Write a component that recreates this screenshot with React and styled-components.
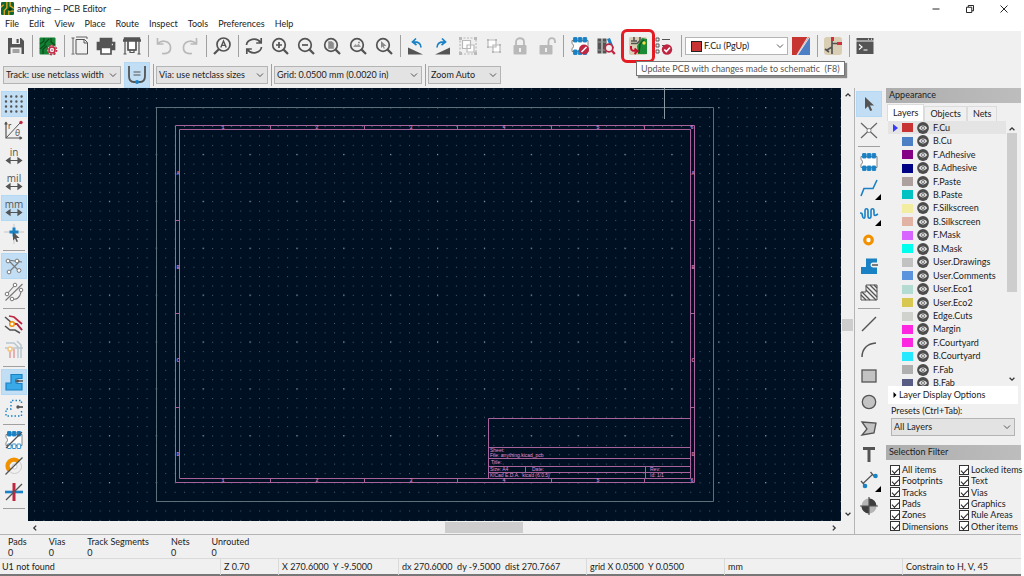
import { useState } from "react";
import styled, { createGlobalStyle } from "styled-components";

const INK = "#545454";
const BLUE = "#1a81c4";
const RED = "#bf2641";
const OFF = "#b9b9b9";
const PINK = "#a9629b";

const GlobalStyle = createGlobalStyle`
  * {
    box-sizing: border-box;
  }
  body {
    margin: 0;
    background: #fff;
    color: #1c1c1c;
    font-family: Lato, "Open Sans", sans-serif;
    font-size: 9px;
    line-height: 12px;
  }
  button, select, input {
    font: inherit;
    color: inherit;
    margin: 0;
  }
`;

// Window
const Window = styled.div`
  display: flex;
  flex-direction: column;
  height: 100vh;
  min-height: 576px;
  padding-right: 3px;
  overflow: hidden;
`;

const TitleBar = styled.header`
  display: flex;
  align-items: center;
  height: 17px;
  padding-left: 1px;
  gap: 3px;
`;

const WindowButtons = styled.div`
  display: flex;
  margin-left: auto;
`;

const WindowButton = styled.button`
  display: grid;
  place-items: center;
  width: 34px;
  height: 16px;
  padding: 0;
  border: 0;
  background: none;
`;

const MenuBar = styled.nav`
  display: flex;
  gap: 10px;
  height: 14px;
  padding-left: 5px;
`;

const MenuItem = styled.button`
  padding: 0;
  border: 0;
  background: none;
  line-height: 14px;
`;

// Toolbars
const TopBar = styled.div`
  display: flex;
  align-items: center;
  height: ${(p) => (p.$short ? "27px" : "30px")};
  padding-left: 3px;
  background: #f0f0f0;
`;

const SideBar = styled.div`
  display: flex;
  flex-direction: column;
  align-items: center;
  width: 28px;
  padding-top: 3px;
  background: #f0f0f0;
`;

const ToolButton = styled.button`
  position: relative;
  display: grid;
  place-items: center;
  flex: none;
  width: 26px;
  height: 26px;
  margin-left: ${(p) => (p.$spaced ? "6px" : "0")};
  padding: 0;
  border: 1px solid ${(p) => (p.$active ? "#b4d9f5" : "transparent")};
  background: ${(p) => (p.$active ? "#c2def4" : "none")};
`;

const Flyout = styled.span`
  position: absolute;
  right: 0;
  bottom: 0;
  border: 3px solid transparent;
  border-right-color: #000;
  border-bottom-color: #000;
`;

const Divider = styled.span`
  display: grid;
  place-items: center;
  flex: none;
  width: ${(p) => (p.$wide ? "8px" : "6px")};
  height: 22px;

  &::before {
    content: "";
    width: 1px;
    height: 100%;
    background: #a0a0a0;
  }
`;

const SideDivider = styled(Divider)`
  width: 22px;
  height: 6px;

  &::before {
    width: 100%;
    height: 1px;
  }
`;

const Callout = styled.span`
  position: absolute;
  inset: -5px;
  border: 3px solid #e31b23;
  border-radius: 6px;
`;

const Tooltip = styled.span`
  position: absolute;
  top: 27px;
  left: 10px;
  z-index: 2;
  padding: 0 4px;
  border: 1px solid #767676;
  background: #fff;
  box-shadow: 2px 2px 1px #8a8a8a;
  color: #575757;
  line-height: 13px;
  white-space: pre;
`;

// Drop-downs
const SelectBox = styled.div`
  display: flex;
  align-items: center;
  position: relative;
  width: ${(p) => p.$width || "100%"};
  height: 18px;
  margin-right: ${(p) => (p.$gap ? "3px" : "0")};
  padding-left: ${(p) => (p.$light ? "5px" : "0")};
  border: 1px solid #b4b4b4;
  background: ${(p) => (p.$light ? "#fff" : "#e3e3e3")};

  svg {
    position: absolute;
    right: 2px;
    pointer-events: none;
  }
`;

const NativeSelect = styled.select`
  flex: 1;
  width: 100%;
  height: 16px;
  padding: 0 12px 0 2px;
  border: 0;
  background: transparent;
  appearance: none;
  line-height: 16px;
  outline: 0;
`;

const Swatch = styled.span`
  flex: none;
  width: 11px;
  height: ${(p) => (p.$framed ? "11px" : "9px")};
  border: ${(p) => (p.$framed ? "1px solid #222" : "0")};
  background: ${(p) => p.$color};
`;

// Workspace
const Workspace = styled.main`
  display: flex;
  flex: 1;
  min-height: 0;
  background: #f0f0f0;
`;

const CanvasArea = styled.section`
  display: grid;
  grid-template-columns: minmax(0, 1fr) 13px;
  grid-template-rows: minmax(0, 1fr) 13px;
  flex: 1;
  border-right: 1px solid #b4b4b4;
`;

const Board = styled.svg`
  width: 100%;
  height: 100%;
  background: #001023;
`;

const ScrollTrack = styled.div`
  display: flex;
  flex-direction: ${(p) => (p.$vertical ? "column" : "row")};
  align-items: center;
  justify-content: space-between;
  padding: ${(p) => (p.$vertical ? "3px 0" : "0 3px")};
  background: #f0f0f0;
`;

const ScrollThumb = styled.div`
  width: ${(p) => (p.$vertical ? "11px" : "78px")};
  height: ${(p) => (p.$vertical ? "12px" : "11px")};
  margin: ${(p) => (p.$vertical ? "40px 0 0" : "0 0 0 98px")};
  background: #cdcdcd;
`;

// Appearance panel
const Panel = styled.aside`
  display: flex;
  flex-direction: column;
  width: 135px;
  margin-left: 3px;
`;

const PanelTitle = styled.h2`
  flex: none;
  height: 15px;
  margin: 0;
  padding-left: 3px;
  background: linear-gradient(90deg, #adadad, #bdbdbd);
  font-size: 9px;
  font-weight: 400;
  line-height: 14px;
`;

const Tabs = styled.div`
  display: flex;
  align-items: flex-end;
  height: 18px;
  padding-left: 1px;
`;

const Tab = styled.button`
  height: ${(p) => (p.$active ? "17px" : "15px")};
  padding: 0 5px;
  border: 1px solid #dcdcdc;
  border-bottom: 0;
  background: ${(p) => (p.$active ? "#fff" : "#f0f0f0")};
`;

const LayerPane = styled.div`
  display: grid;
  grid-template-columns: 1fr 12px;
  height: 265px;
  margin: 0 3px 0 2px;
  overflow: hidden;
`;

const LayerList = styled.div`
  display: grid;
  grid-template-rows: repeat(20, 1fr);
  height: 269px;
`;

const LayerRow = styled.div`
  display: flex;
  align-items: center;
  gap: 4px;
  padding-left: 5px;
  background: ${(p) => (p.$active ? "#e4e4e4" : "transparent")};
`;

const Marker = styled.span`
  border: solid transparent;
  border-width: 4px 0 4px 5px;
  border-left-color: ${(p) => (p.$active ? "#3a3aff" : "transparent")};
`;

const EyeButton = styled.button`
  display: grid;
  padding: 0;
  border: 0;
  background: none;
`;

const LayerScroll = styled.div`
  display: grid;
  grid-template-rows: 12px 159px 1fr;
  justify-items: center;
  align-items: end;
  height: 265px;
  padding-bottom: 3px;

  div {
    width: 10px;
    height: 159px;
    background: #cdcdcd;
  }
`;

const DisplayOptions = styled.button`
  display: flex;
  align-items: center;
  gap: 1px;
  height: 18px;
  margin: 0 3px 0 2px;
  padding: 0 4px;
  border: 0;
  background: #fff;
`;

const Presets = styled.div`
  display: flex;
  flex-direction: column;
  gap: 1px;
  height: 41px;
  padding: 1px 6px 0 5px;
`;

const Filters = styled.div`
  display: grid;
  grid-template-columns: 69px 1fr;
  grid-template-rows: repeat(6, 1fr);
  grid-auto-flow: column;
  height: 68px;
  margin-top: 4px;
  padding-left: 4px;
`;

const FilterLabel = styled.label`
  display: flex;
  align-items: center;
  gap: 2px;
  line-height: 11px;
  white-space: nowrap;
`;

const Tick = styled.input`
  display: grid;
  place-items: center;
  flex: none;
  width: 10px;
  height: 10px;
  border: 1px solid #333;
  background: #fff;
  appearance: none;

  &:checked::before {
    content: "";
    width: 6px;
    height: 3px;
    border: solid #222;
    border-width: 0 0 1px 1px;
    rotate: -45deg;
  }
`;

// Footer
const Messages = styled.dl`
  display: flex;
  gap: 22px;
  height: 24px;
  margin: 0;
  padding: 1px 8px;
  border-top: 1px solid #b4b4b4;
  background: #f0f0f0;
  line-height: 11px;

  dt, dd {
    margin: 0;
  }
`;

const StatusBar = styled.footer`
  display: grid;
  grid-template-columns: 220px 58px 120px 188px 138px 178px 1fr;
  height: 18px;
  border-top: 1px solid #dadada;
  border-bottom: 2px solid #777;
  background: #f0f0f0;
  line-height: 16px;
  white-space: pre;
`;

const StatusCell = styled.span`
  padding-left: ${(p) => (p.$first ? "2px" : "3px")};
  border-left: ${(p) => (p.$first ? "0" : "1px solid #dadada")};
`;

// Icons, all drawn on a 20 x 20 grid
const magnifier = (
  <>
    <circle cx="9" cy="9" r="6.3" />
    <path d="M13.6 13.6 18 18" strokeWidth="2.2" />
  </>
);

const ruler = <path d="M3 14.5h14M6 12l-3.5 2.5L6 17zM14 12l3.5 2.5L14 17z" fill={INK} strokeWidth="1.2" />;

const unitIcon = (text) => (
  <>
    <text x="10" y="10" textAnchor="middle" fontSize="10" fontFamily="Open Sans" fill={INK} stroke="none">
      {text}
    </text>
    {ruler}
  </>
);

const padlock = (shackle) => (
  <>
    <rect x="3.5" y="9" width="13" height="9.5" rx="1" fill={OFF} stroke="none" />
    <path d={shackle} stroke={OFF} strokeWidth="1.8" />
    <path d="M10 12v4" stroke="#f0f0f0" strokeWidth="2" />
  </>
);

const pads = (y, fill = BLUE) =>
  [3.5, 8.3, 13.1].map((x) => (
    <rect key={x} x={x} y={y} width="3.6" height="4.5" rx=".5" fill={fill} stroke={BLUE} strokeWidth=".9" />
  ));

const chipBody = <path d="M2 4.5h16v11H2v-3.2c2-.5 2-4.1 0-4.6z" stroke="#777" fill="#fff" strokeWidth=".9" />;

const ICONS = {
  logo: (
    <>
      <rect x="0" y="0" width="20" height="20" rx="2" fill="#12662c" stroke="none" />
      <path d="M5 20V13l4-4V0M0 8l4-4M14 0v6l6 4M12 20v-6h8" stroke="#e8a71d" strokeWidth="2" />
      <circle cx="14" cy="11" r="2.5" fill="#0a3516" stroke="none" />
    </>
  ),
  save: (
    <>
      <path d="M2 2h13l3 3v13H2z" fill={INK} stroke="none" />
      <path d="M6 2h8v6H6zM4.5 11.5h11V18h-11z" fill="#f0f0f0" stroke="none" />
      <path d="M10.5 3h2.2v4h-2.2z" fill={INK} stroke="none" />
      <path d="M6.5 14h7M6.5 16h7" strokeWidth="1" />
    </>
  ),
  board: (
    <>
      <rect x="1.5" y="1.5" width="16" height="17" rx="1" fill="#128232" stroke="none" />
      <path d="M2 8l4-3V2M2 13l5-4V7l4-4M5 18v-5l4-3M13 2v4l4 3" stroke="#0a4a1c" strokeWidth="1.2" />
      <circle cx="14" cy="14" r="4.6" fill="#f0f0f0" stroke="none" />
      <circle cx="14" cy="14" r="3" stroke={RED} strokeWidth="1.6" />
      <circle cx="14" cy="14" r="4.6" stroke={RED} strokeWidth="1.6" strokeDasharray="1.8 1.8" />
      <circle cx="14" cy="14" r=".8" fill={RED} stroke="none" />
    </>
  ),
  page: (
    <>
      <path d="M6 3.5h8.500l3 3V18H6zM14 3.500V7h3.500" strokeWidth="1" />
      <path d="M3 2v15.500M1.500 2h3M1.500 18h3M6 1h11M17 1v2" strokeWidth=".9" />
    </>
  ),
  print: (
    <>
      <path d="M4.500 2.500h11V6h-11z" fill={INK} />
      <path d="M1.500 6.500h17v7h-3v-2h-11v2h-3z" fill={INK} />
      <path d="M5 11.500h10V18H5z" fill="#fff" />
      <path d="M15.800 8.500h1" stroke="#fff" />
    </>
  ),
  plot: (
    <>
      <path d="M1 4.500h18M3 4.500v-2h14v2" strokeWidth="2.400" />
      <path d="M6 5h8v9H6z" fill="#fff" />
      <path d="M3 5v13M17 5v13M1.500 18h3M15.500 18h3" strokeWidth="1.200" />
      <path d="M6 14h8M8 14v2.500h4V14" strokeWidth="1.200" />
    </>
  ),
  undo: <path d="M3.500 2v6h6M4 7.500C8 3.500 16 5 16.500 11S12 18 8 17.500" stroke={OFF} />,
  redo: <path d="M16.500 2v6h-6M16 7.500C12 3.500 4 5 3.500 11S8 18 12 17.500" stroke={OFF} />,
  find: (
    <>
      <circle cx="11.500" cy="8.500" r="6.500" />
      <path d="M6.800 13.200 2 18" strokeWidth="2.200" />
      <path d="m8.800 11.500 2.700-6.500 2.700 6.500M9.700 9.400h3.600" strokeWidth="1.400" />
    </>
  ),
  refresh: <path d="M2.500 9C3 3.500 12.500 .5 16.500 6.500M17.200 2v5h-5M17.500 11C17 16.500 7.500 19.500 3.500 13.500M2.800 18v-5h5" />,
  zoomIn: <>{magnifier}<path d="M9 6v6M6 9h6" /></>,
  zoomOut: <>{magnifier}<path d="M6 9h6" /></>,
  zoomPage: <>{magnifier}<path d="M6.500 5.500h3.500l1.700 1.700v5.300H6.500z" fill="#8c8c8c" stroke="#8c8c8c" strokeWidth=".5" /></>,
  zoomObjects: <>{magnifier}<path d="m5 11 2.500-3 1.500 1.500 1.500-2L13 11z" fill="#999" stroke="none" /><path d="M10 6.500h2" stroke="#999" /></>,
  zoomSelect: <>{magnifier}<path d="m7 5 5.500 5H9.800l1 2.300-1 .4-1-2.300L7 12z" fill="#888" stroke="none" /></>,
  rotateLeft: (
    <>
      <path d="M2 11.500 17 18.500H2z" fill={INK} stroke="none" />
      <path d="M15 11.500c0-4-3-6-8-5.500M10 2.500 6.500 6l4 3" stroke={BLUE} />
    </>
  ),
  rotateRight: (
    <>
      <path d="M18 11.500 3 18.500h15z" fill={INK} stroke="none" />
      <path d="M5 11.500c0-4 3-6 8-5.500M10 2.500 13.500 6l-4 3" stroke={BLUE} />
    </>
  ),
  group: (
    <>
      <path d="M2 2h16v16H2z" stroke={OFF} strokeWidth="1.200" strokeDasharray="2 1.500" />
      <path d="M1 1h3v3H1zM16 1h3v3h-3zM1 16h3v3H1zM16 16h3v3h-3z" fill={OFF} stroke="none" />
      <path d="M4.500 4.500h8v8h-8zM9 9h7v7H9z" stroke={OFF} fill="#fff" strokeWidth="1.200" />
    </>
  ),
  ungroup: (
    <>
      <path d="M4 4h8v7H4zM9 9h7v7H9z" stroke={OFF} fill="#fff" strokeWidth="1.200" />
      <path d="M3 3h2v2H3zM11 3h2v2h-2zM3 10h2v2H3zM15 8h2v2h-2zM8 15h2v2H8zM15 15h2v2h-2z" fill={OFF} stroke="none" />
    </>
  ),
  lock: padlock("M6 9V6c0-5 8-5 8 0v3"),
  unlock: padlock("M12.500 9V5.500c0-4.500 6.500-4.500 6.500 0V7"),
  footprintCheck: (
    <>
      {chipBody}
      {pads(1.5)}
      {pads(14)}
      <circle cx="14" cy="13.500" r="5" fill={RED} stroke="none" />
      <path d="m11.500 16 5-5" stroke="#fff" strokeWidth="1.600" />
    </>
  ),
  library: (
    <>
      <path d="M1.500 2.500h4v15h-4zM6.500 2.500h4v15h-4z" fill={INK} stroke="none" />
      <path d="m11 3 3-1 4 10-3 1z" fill={BLUE} stroke="none" />
      <path d="M1.500 6h9M1.500 14h9" stroke="#999" strokeWidth="1" />
      <circle cx="13" cy="12" r="3.800" fill="#f0f0f0" stroke={RED} />
      <path d="m15.800 14.800 3 3.200" stroke={RED} strokeWidth="2.400" />
    </>
  ),
  updatePcb: (
    <>
      <rect x="1" y="1" width="18" height="18" rx="2" fill="#d9cdb3" stroke="none" />
      <path d="M6 1v4M3 5h6M3 7.500h6l3-3V1" strokeWidth="1.600" />
      <path d="m19 3-5-1-5 8 1 8h9z" fill="#1b8a35" stroke="none" />
      <path d="m11 17 1-9 4-4" stroke="#0d5420" strokeWidth="1.400" />
      <circle cx="16" cy="7" r="1.700" fill="#f3df4d" stroke="none" />
      <path d="M3 10v2c0 3 2 3 6 3M6.500 12.500 9.500 15l-3 3" stroke="#c8102e" strokeWidth="2" />
    </>
  ),
  drc: (
    <>
      <path d="M2 2h3v3H2zM2 8h3v3H2zM2 14h3v3H2zM8 3.500h8M8 9.500h3" strokeWidth="1" />
      <circle cx="13" cy="13.500" r="5.200" fill={RED} stroke="none" />
      <path d="m10.300 13.500 2 2 3.700-4" stroke="#fff" />
    </>
  ),
  layerPair: (
    <>
      <path d="M1 1h17L6 19H1z" fill="#c8342f" stroke="none" />
      <path d="M19 1v18H7z" fill="#4d7fc4" stroke="none" />
      <path d="M17 1 6 19" stroke="#ddd" strokeWidth="1.200" />
    </>
  ),
  schematic: (
    <>
      <rect x="1" y="1" width="18" height="18" rx="3" fill="#d9cdb3" stroke="none" />
      <path d="M9 2v9l-5 3M9 11v7M2 13l4 3M9 7.500h9" strokeWidth="1.700" />
      <path d="M8 1h3v4H8zM14 6h5v3h-5z" fill="#d22f3c" stroke="none" />
    </>
  ),
  terminal: (
    <>
      <path d="M1.500 2h17v2.500h-17zM1.500 5.500h17V18h-17z" fill={INK} stroke="none" />
      <path d="m4 8.500 3 2.500-3 2.500M8.500 14h4" stroke="#fff" strokeWidth="1.200" />
      <path d="M13 3.200h1M16 3.200h1" stroke="#fff" strokeWidth="1" />
    </>
  ),
  trackWidth: (
    <>
      <path d="M2 1v10c0 4 1 6 5 6h6c4 0 5-2 5-6V1" strokeWidth="1.800" />
      <path d="M6.500 7h7M6.500 10h7" strokeWidth="1.200" />
      <circle cx="10" cy="17" r="2" fill={BLUE} stroke="none" />
    </>
  ),
  grid: (
    <path
      d="M2 2.500h16M2 7.500h16M2 12.500h16M2 17.500h16"
      strokeWidth="2.400"
      strokeLinecap="round"
      strokeDasharray="0 5.200"
    />
  ),
  polar: (
    <>
      <path d="M2 2v16h16M2 2 .8 4.500M2 2l1.200 2.500M18 18l-2.500-1.200M18 18l-2.500 1.200" strokeWidth="1.200" />
      <path d="M2 18 16 3" strokeWidth="1" />
      <circle cx="17" cy="2.500" r="1.700" fill={RED} stroke="none" />
      <text x="4" y="9" fontSize="9" fill={INK} stroke="none">r</text>
      <text x="11" y="16" fontSize="9" fontStyle="italic" fill={INK} stroke="none">θ</text>
    </>
  ),
  inches: unitIcon("in"),
  mils: unitIcon("mil"),
  millimetres: unitIcon("mm"),
  crosshair: (
    <>
      <path d="M10 0v20M0 8h20" stroke="#bbb" strokeWidth=".8" />
      <path d="M10 3.500v9M5.500 8h9" stroke={BLUE} strokeWidth="3" />
      <path d="m9 8 6.500 6h-3l1.500 3.500-1.500.5-1.500-3.500-2 2z" fill={INK} stroke="none" />
    </>
  ),
  ratsnest: (
    <>
      <path d="m4 4 11 11M16 5 5 16M4 4l14 2" stroke="#777" strokeWidth="1.100" />
      {[[4, 5], [13, 5], [15, 14.5], [5, 16]].map(([x, y]) => (
        <circle key={x} cx={x} cy={y} r="1.900" fill="#fff" stroke="#777" strokeWidth="1" />
      ))}
    </>
  ),
  curvedRatsnest: (
    <>
      <path d="M1.500 18.500 18.500 2M3 12 11 3M9 17c4 1 7-2 8-7" stroke="#777" strokeWidth="1.100" />
      {[[3, 12], [11, 3], [17, 8], [8, 17]].map(([x, y]) => (
        <circle key={x} cx={x} cy={y} r="1.800" fill="#fff" stroke="#777" strokeWidth="1" />
      ))}
    </>
  ),
  netColors: (
    <>
      <path d="M1 3l7 6 5 1 5 6M1 12l5 4h5l5 3" strokeWidth="1.600" />
      <path d="M5 2l5 1 8 7M9 10h4l5 6" stroke={RED} />
      <circle cx="8" cy="10" r="2.300" stroke="#f29100" fill="#fff" strokeWidth="1.500" />
    </>
  ),
  dimTracks: (
    <>
      <path d="M2 3h8l4 4v11M13 1l4 4v13M1 8h18" stroke="#b9c6cf" strokeWidth="1.500" />
      <path d="M6 10v8M10 9v9" stroke="#e4b0b3" strokeWidth="2" />
      <circle cx="6" cy="9" r="2" stroke="#f5c684" fill="#fff" />
    </>
  ),
  zoneFill: (
    <>
      <path d="M7 2.500h11v4h-4a2.500 2.500 0 0 0 0 5h4V18H2v-7h5z" fill="#39a9e8" stroke={BLUE} strokeWidth="1.200" />
      <circle cx="13.500" cy="9" r="1.600" fill={INK} stroke="none" />
      <path d="M13 9h6" strokeWidth="1.500" />
    </>
  ),
  zoneOutline: (
    <>
      <path d="M17.500 5V2.500H7V11H2v7h15.500v-5" stroke={BLUE} strokeWidth="1.400" strokeDasharray="1.500 2" />
      <circle cx="14" cy="9" r="1.700" fill={INK} stroke="none" />
      <path d="M14 9h5" />
    </>
  ),
  padSketch: (
    <>
      {chipBody}
      {pads(1.5)}
      {pads(14, "#fff")}
      <path d="M2 18 18 2" strokeWidth="1.200" />
    </>
  ),
  viaSketch: (
    <>
      <circle cx="10.500" cy="10.500" r="7" stroke="#ccc" strokeWidth="1" />
      <path d="M5.500 14.500A6 6 0 0 1 14.500 5.500" stroke="#f29100" strokeWidth="4.500" />
      <circle cx="10.500" cy="10.500" r="2.500" stroke="#ccc" strokeWidth="1" fill="#fff" />
      <path d="M1.500 18.500 18.500 1.500" strokeWidth="1.200" />
    </>
  ),
  trackSketch: (
    <>
      <path d="M1 10h18" stroke={BLUE} strokeWidth="2.600" />
      <path d="M10 1v18" stroke={RED} strokeWidth="3" />
      <path d="M2 18 18 2" strokeWidth="1.200" />
    </>
  ),
  pointer: <path d="m6 3 9 8.500h-4l2.200 4.700-2 .8-2.200-4.700L6 15z" fill={INK} stroke="none" />,
  localRatsnest: (
    <>
      <path d="M2 3l16 15M18 3 2 18" stroke="#666" strokeWidth="1.200" />
      <circle cx="10" cy="10.500" r="2" fill="#fff" stroke="#888" strokeWidth="1" />
    </>
  ),
  footprint: <>{chipBody}{pads(1.5)}{pads(14)}</>,
  route: <path d="M2 18 5 10.500h9L18 2" stroke={BLUE} strokeWidth="1.600" />,
  tune: <path d="M1 9c2 0 2 0 2.500 3s2.500 3 2.500 0V7c0-3 3-3 3 0v5c0 3 3 3 3 0V7c0-3 3-3 3 0v3c0 2 1 2 4 0" stroke={BLUE} strokeWidth="1.600" />,
  via: <circle cx="9.500" cy="10" r="3.800" stroke="#f29100" strokeWidth="3.200" fill="#fff" />,
  zone: (
    <>
      <path d="M7 2.500h11v4h-4a2.500 2.500 0 0 0 0 5h4V18H2v-7h5z" fill={BLUE} stroke="none" />
      <path d="M13 9h6" strokeWidth="1.500" />
    </>
  ),
  ruleArea: (
    <>
      <path d="M7 3h11v15H2v-8h5z" strokeWidth="1" />
      <path d="m7 4 11 11M7 8l10 10M11 3l7 7M3 10l8 8M2 13l5 5M15 3l3 3" strokeWidth="1.300" />
    </>
  ),
  line: <path d="M3 17 17 3" strokeWidth="1.500" />,
  arc: <path d="M3 17C3 9 8 3.500 17 3" strokeWidth="1.500" />,
  rect: <rect x="3" y="4" width="14" height="12" fill="#c3c3c3" strokeWidth="1.300" />,
  circle: <circle cx="10" cy="10" r="6.700" fill="#c3c3c3" strokeWidth="1.300" />,
  polygon: <path d="m3 4 14 1-2 10-12 2 5-6z" fill="#c3c3c3" strokeWidth="1.300" />,
  text: <path d="M4 4.500h12M10 4v14" strokeWidth="3" />,
  dimension: (
    <>
      <path d="M4 13.500 14 4M2 11l3.500 4M11.500 2l3.500 4" strokeWidth="1.200" />
      <circle cx="6" cy="16" r="2.300" fill={BLUE} stroke="none" />
      <circle cx="16.500" cy="6" r="2.300" fill={BLUE} stroke="none" />
    </>
  ),
  origin: (
    <>
      <circle cx="10" cy="10" r="7.500" fill="#b5b5b5" stroke="none" />
      <path d="M10 10V2.500A7.500 7.500 0 0 1 17.500 10zM10 10v7.500A7.500 7.500 0 0 1 2.500 10z" fill="#3d3d3d" stroke="none" />
      <path d="M10 1v18M1 10h18" strokeWidth="1.200" />
    </>
  ),
  eye: (
    <>
      <circle cx="10" cy="10" r="9.800" fill="#4d4d4d" stroke="none" />
      <path d="M3 10c3.500-5.500 10.500-5.500 14 0-3.500 5.500-10.500 5.500-14 0z" fill="#e0e0e0" stroke="none" />
      <circle cx="10" cy="10" r="2.600" stroke="#777" strokeWidth="1.600" />
    </>
  ),
  minimize: <path d="M3 10h14" stroke="#111" strokeWidth="1.800" />,
  restore: <path d="M3 6.500h10.500V17H3zM6.500 6V3H17v10.500h-3" stroke="#111" strokeWidth="1.800" />,
  close: <path d="m3 3 14 14M17 3 3 17" stroke="#111" strokeWidth="1.800" />,
  down: <path d="m4 7 6 6 6-6" stroke="#444" strokeWidth="1.800" />,
  scrollDown: <path d="m4 7 6 6 6-6" stroke="#333" strokeWidth="3.200" />,
  up: <path d="m4 13 6-6 6 6" stroke="#333" strokeWidth="3.200" />,
  left: <path d="m13 4-6 6 6 6" stroke="#333" strokeWidth="3.200" />,
  right: <path d="m7 4 6 6-6 6" stroke="#333" strokeWidth="3.200" />,
  expand: <path d="m5 0 10 10-10 10z" fill="#000" stroke="none" />,
};

const IconSvg = styled.svg`
  overflow: visible;
`;

const Icon = ({ name, size = 20 }) => (
  <IconSvg width={size} height={size} viewBox="0 0 20 20" fill="none" stroke={INK} strokeWidth="1.7" aria-hidden="true">
    {ICONS[name]}
  </IconSvg>
);

const MENUS = ["File", "Edit", "View", "Place", "Route", "Inspect", "Tools", "Preferences", "Help"];

// "|" is a divider, "||" a wide one
const TOP_TOOLS = [
  "save", "|", "board", "|", "page", "print", "plot", "|", "undo", "redo", "|", "find", "|",
  "refresh", "zoomIn", "zoomOut", "zoomPage", "zoomObjects", "zoomSelect", "|",
  "rotateLeft", "rotateRight", "group", "ungroup", "lock", "unlock", "||", "footprintCheck", "library",
];

const LEFT_TOOLS = [
  "grid", "polar", "inches", "mils", "millimetres", "crosshair", "|", "ratsnest", "curvedRatsnest", "|",
  "netColors", "dimTracks", "|", "zoneFill", "zoneOutline", "|", "padSketch", "viaSketch", "trackSketch", "|",
];

const RIGHT_TOOLS = [
  "pointer", "localRatsnest", "|", "footprint", "route", "tune", "via", "zone", "ruleArea", "|",
  "line", "arc", "rect", "circle", "polygon", "text", "dimension", "origin",
];

const ACTIVE = ["grid", "millimetres", "ratsnest", "zoneFill", "pointer"];
const WITH_FLYOUT = ["route", "tune", "dimension"];

const LAYERS = [
  ["F.Cu", "#c83434"],
  ["B.Cu", "#4d7fc4"],
  ["F.Adhesive", "#840084"],
  ["B.Adhesive", "#000084"],
  ["F.Paste", "#aea09e"],
  ["B.Paste", "#00c2c2"],
  ["F.Silkscreen", "#f2eda1"],
  ["B.Silkscreen", "#e2b2a4"],
  ["F.Mask", "#d864ff"],
  ["B.Mask", "#02ffee"],
  ["User.Drawings", "#c2c2c2"],
  ["User.Comments", "#5994dc"],
  ["User.Eco1", "#b4dbd2"],
  ["User.Eco2", "#d8c852"],
  ["Edge.Cuts", "#d0d2cd"],
  ["Margin", "#ff26e2"],
  ["F.Courtyard", "#ff26e2"],
  ["B.Courtyard", "#26e9ff"],
  ["F.Fab", "#afafaf"],
  ["B.Fab", "#585d84"],
];

const FILTERS = [
  "All items", "Footprints", "Tracks", "Pads", "Zones", "Dimensions",
  "Locked items", "Text", "Vias", "Graphics", "Rule Areas", "Other items",
];

const MESSAGES = ["Pads", "Vias", "Track Segments", "Nets", "Unrouted"];

const STATUS = [
  "U1 not found",
  "Z 0.70",
  "X 270.6000  Y -9.5000",
  "dx 270.6000  dy -9.5000  dist 270.7667",
  "grid X 0.0500  Y 0.0500",
  "mm",
  "Constrain to H, V, 45",
];

const Dropdown = ({ label, value, width, light, gap, children }) => (
  <SelectBox $width={width} $light={light} $gap={gap}>
    {children}
    <NativeSelect aria-label={label} defaultValue={value}>
      <option>{value}</option>
    </NativeSelect>
    <Icon name="down" size={10} />
  </SelectBox>
);

const SideTools = ({ tools }) => (
  <SideBar>
    {tools.map((name, i) =>
      name === "|" ? (
        <SideDivider key={i} />
      ) : (
        <ToolButton key={i} $active={ACTIVE.includes(name)} aria-label={name}>
          <Icon name={name} />
          {WITH_FLYOUT.includes(name) && <Flyout />}
        </ToolButton>
      )
    )}
  </SideBar>
);

const TITLE_TEXT = [
  [490, 452, "Sheet:"],
  [490, 457, "File: anything.kicad_pcb"],
  [491, 464, "Title:"],
  [490, 471, "Size: A4"],
  [532, 471, "Date:"],
  [650, 471, "Rev:"],
  [490, 477, "KiCad E.D.A.  kicad (6.0.5)"],
  [650, 477, "Id: 1/1"],
];

const Sheet = () => (
  <Board viewBox="28 88 813 433" preserveAspectRatio="xMinYMin slice">
    <defs>
      <pattern id="dots" x="34" y="98" width="9.375" height="9.375" patternUnits="userSpaceOnUse">
        <rect width="1" height="1" fill="#4d5f6b" />
      </pattern>
      <pattern id="majorDots" x="62" y="107" width="46.875" height="46.875" patternUnits="userSpaceOnUse">
        <rect width="1.200" height="1.200" fill="#8b98a4" />
      </pattern>
    </defs>
    <rect x="28" y="88" width="814" height="433" fill="url(#dots)" />
    <rect x="28" y="88" width="814" height="433" fill="url(#majorDots)" />
    <path d="M156.500 107.500h557v394h-557z" fill="none" stroke="#5d7078" />
    <path d="M634 89.500h59M664.500 88v31" stroke="#8d979f" />
    <g fill="none" stroke={PINK}>
      <path d="M175.500 125.500h519v357h-519zM179.500 129.500h511v349h-511z" />
      <path d="M488.500 478V418.500H691M488 447.500h203M488 458.500h203M488 466.500h203M488 472.500h203M525.500 467v5M645.500 467v12" />
      {[270, 364, 457, 551, 644].map((x) => (
        <path key={x} d={`M${x}.5 126v4M${x}.5 479v4`} />
      ))}
      {[220, 313, 407].map((y) => (
        <path key={y} d={`M176 ${y}.5h4M691 ${y}.5h4`} />
      ))}
    </g>
    <g fill="#d07fc3" fontFamily="Liberation Mono, monospace" fontSize="5" fontWeight="700" textAnchor="middle">
      {[223, 317, 411, 504, 598, 692].map((x, i) => (
        <g key={x}>
          <text x={x} y="129">{i + 1}</text>
          <text x={x} y="482">{i + 1}</text>
        </g>
      ))}
      {[173, 267, 360, 454].map((y, i) => (
        <g key={y}>
          <text x="178" y={y + 2}>{"ABCD"[i]}</text>
          <text x="693" y={y + 2}>{"ABCD"[i]}</text>
        </g>
      ))}
    </g>
    <g fill="#e08fd3" fontFamily="Liberation Sans, sans-serif" fontSize="5">
      {TITLE_TEXT.map(([x, y, text]) => (
        <text key={text} x={x} y={y} xmlSpace="preserve">{text}</text>
      ))}
    </g>
  </Board>
);

const App = () => {
  const [layer, setLayer] = useState("F.Cu");
  const [tab, setTab] = useState("Layers");

  return (
    <>
      <GlobalStyle />
      <Window>
        <TitleBar>
          <Icon name="logo" size={13} />
          <span>anything — PCB Editor</span>
          <WindowButtons>
            {["minimize", "restore", "close"].map((name) => (
              <WindowButton key={name} aria-label={name}>
                <Icon name={name} size={10} />
              </WindowButton>
            ))}
          </WindowButtons>
        </TitleBar>
        <MenuBar>
          {MENUS.map((name) => (
            <MenuItem key={name}>{name}</MenuItem>
          ))}
        </MenuBar>

        <TopBar>
          {TOP_TOOLS.map((name, i) =>
            name.startsWith("|") ? (
              <Divider key={i} $wide={name === "||"} />
            ) : (
              <ToolButton key={i} aria-label={name}>
                <Icon name={name} />
              </ToolButton>
            )
          )}
          <ToolButton $spaced aria-label="Update PCB from schematic">
            <Icon name="updatePcb" />
            <Callout />
            <Tooltip>{"Update PCB with changes made to schematic  (F8)"}</Tooltip>
          </ToolButton>
          <ToolButton aria-label="Design rules checker">
            <Icon name="drc" />
          </ToolButton>
          <Divider $wide />
          <Dropdown label="Active layer" value="F.Cu (PgUp)" width="103px" light>
            <Swatch $color="#c83434" $framed />
          </Dropdown>
          <ToolButton aria-label="Layer pair">
            <Icon name="layerPair" />
          </ToolButton>
          <Divider />
          <ToolButton aria-label="Schematic editor">
            <Icon name="schematic" />
          </ToolButton>
          <Divider />
          <ToolButton aria-label="Scripting console">
            <Icon name="terminal" />
          </ToolButton>
        </TopBar>

        <TopBar $short>
          <Dropdown label="Track width" value="Track: use netclass width" width="118px" gap />
          <ToolButton $active aria-label="Use existing track width">
            <Icon name="trackWidth" />
          </ToolButton>
          <Divider />
          <Dropdown label="Via size" value="Via: use netclass sizes" width="112px" />
          <Divider />
          <Dropdown label="Grid" value="Grid: 0.0500 mm (0.0020 in)" width="148px" />
          <Divider />
          <Dropdown label="Zoom" value="Zoom Auto" width="73px" />
        </TopBar>

        <Workspace>
          <SideTools tools={LEFT_TOOLS} />
          <CanvasArea>
            <Sheet />
            <ScrollTrack $vertical>
              <Icon name="up" size={8} />
              <ScrollThumb $vertical />
              <Icon name="scrollDown" size={8} />
            </ScrollTrack>
            <ScrollTrack>
              <Icon name="left" size={8} />
              <ScrollThumb />
              <Icon name="right" size={8} />
            </ScrollTrack>
          </CanvasArea>
          <SideTools tools={RIGHT_TOOLS} />
          <Panel>
            <PanelTitle>Appearance</PanelTitle>
            <Tabs>
              {["Layers", "Objects", "Nets"].map((name) => (
                <Tab key={name} $active={tab === name} onClick={() => setTab(name)}>
                  {name}
                </Tab>
              ))}
            </Tabs>
            <LayerPane>
              <LayerList>
                {LAYERS.map(([name, color]) => (
                  <LayerRow key={name} $active={layer === name} onClick={() => setLayer(name)}>
                    <Marker $active={layer === name} />
                    <Swatch $color={color} />
                    <EyeButton aria-label={`Show ${name}`}>
                      <Icon name="eye" size={12} />
                    </EyeButton>
                    <span>{name}</span>
                  </LayerRow>
                ))}
              </LayerList>
              <LayerScroll>
                <Icon name="up" size={8} />
                <div />
                <Icon name="scrollDown" size={8} />
              </LayerScroll>
            </LayerPane>
            <DisplayOptions>
              <Icon name="expand" size={6} />
              Layer Display Options
            </DisplayOptions>
            <Presets>
              <label htmlFor="presets">Presets (Ctrl+Tab):</label>
              <SelectBox>
                <NativeSelect id="presets">
                  <option>All Layers</option>
                </NativeSelect>
                <Icon name="down" size={10} />
              </SelectBox>
            </Presets>
            <PanelTitle>Selection Filter</PanelTitle>
            <Filters>
              {FILTERS.map((name) => (
                <FilterLabel key={name}>
                  <Tick type="checkbox" defaultChecked />
                  {name}
                </FilterLabel>
              ))}
            </Filters>
          </Panel>
        </Workspace>

        <Messages>
          {MESSAGES.map((name) => (
            <div key={name}>
              <dt>{name}</dt>
              <dd>0</dd>
            </div>
          ))}
        </Messages>
        <StatusBar>
          {STATUS.map((text, i) => (
            <StatusCell key={text} $first={i === 0}>
              {text}
            </StatusCell>
          ))}
        </StatusBar>
      </Window>
    </>
  );
};

export default App;
